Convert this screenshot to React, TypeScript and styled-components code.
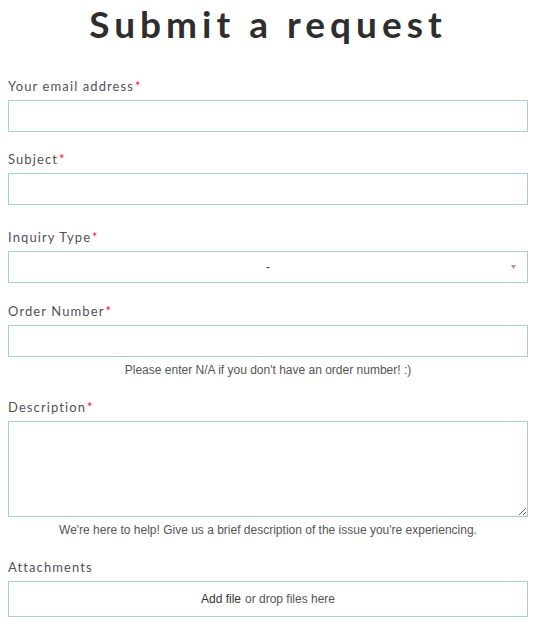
import styled, { createGlobalStyle } from "styled-components";

const GlobalStyle = createGlobalStyle`
  body {
    margin: 0 8px;
    background: #fff;
    font-family: Lato, "Open Sans", sans-serif;
  }
`;

const SForm = styled.form`
  display: flex;
  flex-direction: column;
`;

const STitle = styled.h1`
  margin: 0;
  padding-top: 2px;
  text-align: center;
  font-family: Lato, sans-serif;
  font-weight: 700;
  font-size: 37px;
  line-height: 44px;
  letter-spacing: 5px;
  color: #2e2e2e;
`;

const SField = styled.div<{ $top: number }>`
  display: flex;
  flex-direction: column;
  margin-top: ${(p) => p.$top}px;
`;

const SLabel = styled.label`
  font-family: Lato, sans-serif;
  font-size: 13px;
  line-height: 16px;
  letter-spacing: 1.1px;
  color: #555058;
  margin-bottom: 6px;

  .req {
    color: #ee2222;
    margin-left: 1px;
  }
`;

const SInput = styled.input`
  box-sizing: border-box;
  height: 32px;
  width: 100%;
  border: 1px solid #9ed3dc;
  border-radius: 0;
  padding: 0 8px;
  outline: none;
`;

const SSelect = styled.div`
  box-sizing: border-box;
  position: relative;
  height: 32px;
  border: 1px solid #9ed3dc;
  display: flex;
  align-items: center;
  justify-content: center;
  font-family: "Liberation Sans", Arial, sans-serif;
  font-size: 12px;
  color: #333;

  svg {
    position: absolute;
    right: 11px;
    top: 13px;
  }
`;

const STextArea = styled.textarea`
  box-sizing: border-box;
  height: 96px;
  width: 100%;
  border: 1px solid #9ed3dc;
  border-radius: 0;
  resize: vertical;
  outline: none;
  display: block;
`;

const SHint = styled.p`
  margin: 6px 0 0;
  text-align: center;
  font-family: "Liberation Sans", Arial, sans-serif;
  font-size: 12px;
  line-height: 14px;
  color: #555;
`;

const SDrop = styled.div`
  box-sizing: border-box;
  height: 36px;
  border: 1px solid #9ed3dc;
  display: flex;
  align-items: center;
  justify-content: center;
  font-family: "Liberation Sans", Arial, sans-serif;
  font-size: 12px;
  color: #555;

  a {
    color: #333;
    text-decoration: none;
    margin-right: 4px;
  }
`;

function Label({ text, required }: { text: string; required?: boolean }) {
  return (
    <SLabel>
      {text}
      {required ? <span className="req">*</span> : null}
    </SLabel>
  );
}

export default function App() {
  return (
    <>
      <GlobalStyle />
      <SForm>
        <STitle>Submit a request</STitle>
        <SField $top={32}>
          <Label text="Your email address" required />
          <SInput type="text" />
        </SField>
        <SField $top={19}>
          <Label text="Subject" required />
          <SInput type="text" />
        </SField>
        <SField $top={24}>
          <Label text="Inquiry Type" required />
          <SSelect>
            -
            <svg width="5" height="4" viewBox="0 0 5 4">
              <path d="M0 0h5L2.5 4z" fill="#999" />
            </svg>
          </SSelect>
        </SField>
        <SField $top={20}>
          <Label text="Order Number" required />
          <SInput type="text" />
          <SHint>Please enter N/A if you don't have an order number! :)</SHint>
        </SField>
        <SField $top={22}>
          <Label text="Description" required />
          <STextArea />
          <SHint>We're here to help! Give us a brief description of the issue you're experiencing.</SHint>
        </SField>
        <SField $top={22}>
          <Label text="Attachments" />
          <SDrop>
            <a href="#">Add file</a> or drop files here
          </SDrop>
        </SField>
      </SForm>
    </>
  );
}
